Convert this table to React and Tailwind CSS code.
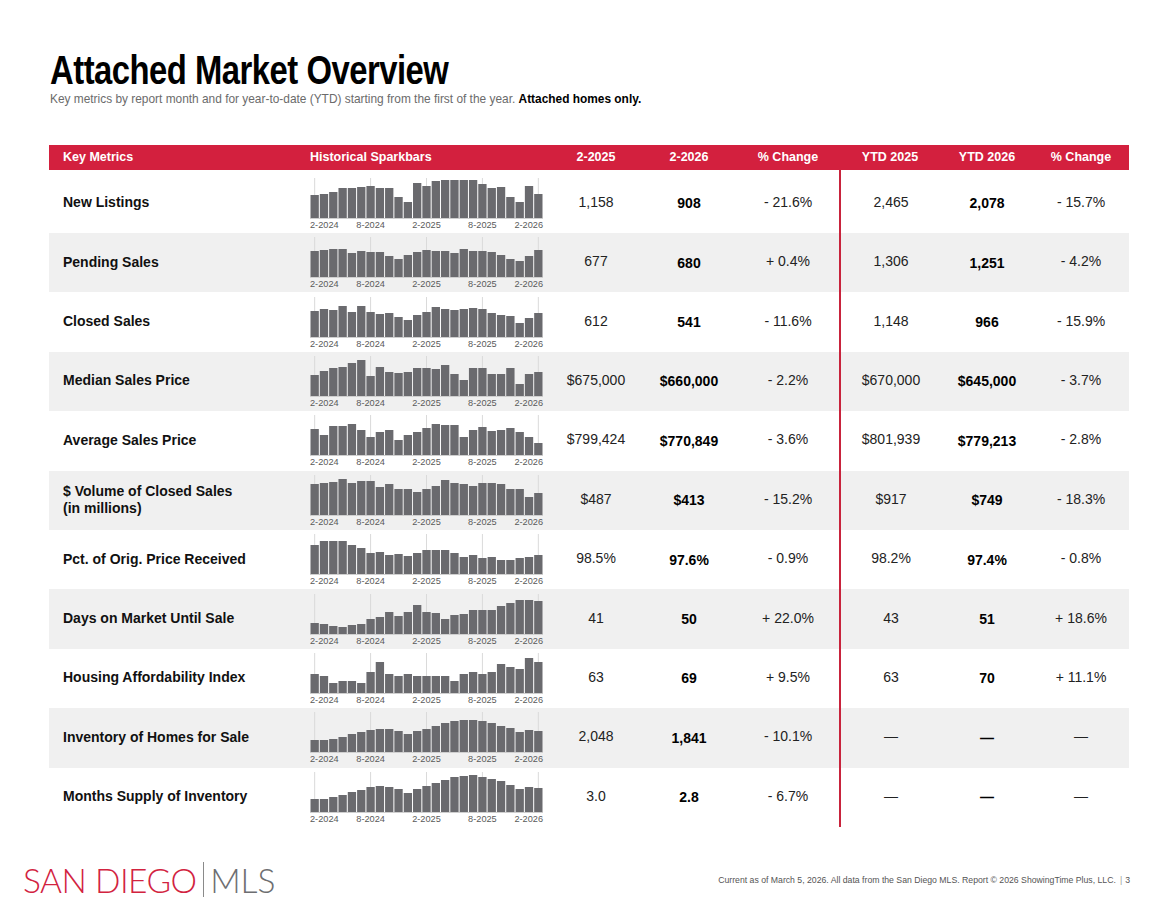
import React from "react";

const rows = [
  { label: "New Listings", a: "1,158", b: "908", c: "- 21.6%", d: "2,465", e: "2,078", f: "- 15.7%",
    bars: [23,24,26,30,30,31,32,30,30,21,16,35,32,37,38,38,38,38,34,30,31,21,16,32,24] },
  { label: "Pending Sales", a: "677", b: "680", c: "+ 0.4%", d: "1,306", e: "1,251", f: "- 4.2%",
    bars: [26,27,28,28,24,26,25,25,21,18,22,25,27,26,26,24,28,26,26,25,22,18,16,21,27] },
  { label: "Closed Sales", a: "612", b: "541", c: "- 11.6%", d: "1,148", e: "966", f: "- 15.9%",
    bars: [26,28,27,31,25,31,25,23,24,20,17,22,25,30,28,27,28,29,28,24,22,21,14,19,24] },
  { label: "Median Sales Price", a: "$675,000", b: "$660,000", c: "- 2.2%", d: "$670,000", e: "$645,000", f: "- 3.7%",
    bars: [21,25,28,29,33,36,20,29,24,23,24,28,28,27,31,22,16,28,28,22,22,28,12,22,24] },
  { label: "Average Sales Price", a: "$799,424", b: "$770,849", c: "- 3.6%", d: "$801,939", e: "$779,213", f: "- 2.8%",
    bars: [26,20,29,29,31,25,18,23,25,15,20,23,27,31,30,30,18,25,28,24,25,27,23,18,12] },
  { label: "$ Volume of Closed Sales", label2: "(in millions)", a: "$487", b: "$413", c: "- 15.2%", d: "$917", e: "$749", f: "- 18.3%",
    bars: [31,32,33,36,32,34,34,28,31,26,26,23,26,29,35,32,31,29,32,32,31,26,26,18,22] },
  { label: "Pct. of Orig. Price Received", a: "98.5%", b: "97.6%", c: "- 0.9%", d: "98.2%", e: "97.4%", f: "- 0.8%",
    bars: [29,33,33,33,29,26,21,22,19,20,18,21,24,24,24,21,17,19,16,17,14,14,16,17,19] },
  { label: "Days on Market Until Sale", a: "41", b: "50", c: "+ 22.0%", d: "43", e: "51", f: "+ 18.6%",
    bars: [11,10,8,7,9,10,15,17,22,18,22,29,22,21,15,19,20,24,24,24,28,31,34,34,33] },
  { label: "Housing Affordability Index", a: "63", b: "69", c: "+ 9.5%", d: "63", e: "70", f: "+ 11.1%",
    bars: [19,17,10,12,12,10,21,31,19,17,19,17,17,17,17,12,19,21,19,21,29,26,24,35,31] },
  { label: "Inventory of Homes for Sale", a: "2,048", b: "1,841", c: "- 10.1%", d: "\u2014", e: "\u2014", f: "\u2014",
    bars: [12,12,13,15,18,20,22,23,23,21,18,21,23,26,29,31,32,32,31,29,26,24,20,22,21] },
  { label: "Months Supply of Inventory", a: "3.0", b: "2.8", c: "- 6.7%", d: "\u2014", e: "\u2014", f: "\u2014",
    bars: [13,13,15,17,20,22,25,26,25,23,19,23,26,29,32,35,36,37,35,33,31,27,23,25,24] },
];

const labels = ["2-2024", "8-2024", "2-2025", "8-2025", "2-2026"];

function Spark({ data }) {
  const x0 = 10;
  const pitch = 9.32;
  const base = 44;
  const end = x0 + 25 * pitch;
  return (
    <svg width="251" height="59" className="block">
      {labels.map((l, k) => {
        const x = x0 + (k * 6 + 0.5) * pitch;
        return <line key={l} x1={x} x2={x} y1={4} y2={base} stroke="#dadada" strokeWidth="1" />;
      })}
      {data.map((h, i) => (
        <rect key={i} x={x0 + i * pitch + 0.5} y={base - h} width={pitch - 1} height={h} fill="#6a6a6e" />
      ))}
      <line x1={x0} x2={end} y1={base + 0.5} y2={base + 0.5} stroke="#cfcfcf" strokeWidth="1" />
      {labels.map((l, k) => {
        let x = x0 + (k * 6 + 0.5) * pitch;
        let anchor = "middle";
        if (k === 0) { x = x0; anchor = "start"; }
        if (k === 4) { x = end; anchor = "end"; }
        return (
          <text key={l} x={x} y={54} textAnchor={anchor} fontSize="9.2" fill="#5a5a5a" fontFamily="'Liberation Sans', Arial, sans-serif">
            {l}
          </text>
        );
      })}
    </svg>
  );
}

const grid = "grid grid-cols-[251px_251px_90px_96px_102px_102px_92px_96px]";

export default function App() {
  return (
    <div className="w-[1174px] h-[903px] bg-white flex flex-col font-['Liberation_Sans',Arial,sans-serif] text-[#111]">
      <div className="pl-[50px] pt-[50px]">
        <h1 className="text-[40px] leading-[40px] font-bold text-black tracking-[-0.6px] scale-x-[0.82] origin-left whitespace-nowrap">
          Attached Market Overview
        </h1>
        <p className="mt-[2px] text-[11.9px] leading-[14px] text-[#6b6b6b]">
          Key metrics by report month and for year-to-date (YTD) starting from the first of the year.{" "}
          <span className="font-bold text-black">Attached homes only.</span>
        </p>
      </div>

      <div className="ml-[49px] mt-[39px] w-[1080px]">
        <div className={`${grid} h-[25px] bg-[#d3203e] text-white text-[12.5px] font-bold items-center`}>
          <div className="pl-[14px]">Key Metrics</div>
          <div className="pl-[10px]">Historical Sparkbars</div>
          <div className="text-center">2-2025</div>
          <div className="text-center">2-2026</div>
          <div className="text-center">% Change</div>
          <div className="text-center">YTD 2025</div>
          <div className="text-center">YTD 2026</div>
          <div className="text-center">% Change</div>
        </div>
        {rows.map((r, i) => (
          <div
            key={r.label}
            className={`${grid} ${i === 0 ? "h-[63px] pt-[3.6px]" : "h-[59.4px]"} ${i % 2 === 1 ? "bg-[#f0f0f0]" : "bg-white"} text-[14px]`}
          >
            <div className="pl-[14px] flex flex-col justify-center font-bold leading-[17px] text-[#111] pb-[1px]">
              <span>{r.label}</span>
              {r.label2 && <span>{r.label2}</span>}
            </div>
            <div className="flex items-center">
              <Spark data={r.bars} />
            </div>
            <div className="flex items-center justify-center text-[#222] pb-[2px]">{r.a}</div>
            <div className="flex items-center justify-center font-bold text-black pt-[1px]">{r.b}</div>
            <div className="flex items-center justify-center text-[#222] pb-[2px]">{r.c}</div>
            <div
              className={`flex items-center justify-center text-[#222] border-l-2 border-[#c8233c] ${i === 0 ? "-mt-[3.6px] pt-[1.6px]" : "pb-[2px]"}`}
            >
              {r.d}
            </div>
            <div className="flex items-center justify-center font-bold text-black pt-[1px]">{r.e}</div>
            <div className="flex items-center justify-center text-[#222] pb-[2px]">{r.f}</div>
          </div>
        ))}
      </div>

      <div className="mt-[35px] pl-[23px] pr-[44px] flex items-center justify-between">
        <div className="flex items-center h-[36px]">
          <span className="text-[33.5px] leading-[36px] font-light text-[#d2233f] tracking-[-0.5px] font-['Lato','Open_Sans',sans-serif]">SAN DIEGO</span>
          <span className="w-[1.5px] h-[35px] bg-[#8a8a8a] ml-[6px] mr-[6px]" />
          <span className="text-[33.5px] leading-[36px] font-light text-[#6d6e71] font-['Lato','Open_Sans',sans-serif]">MLS</span>
        </div>
        <div className="text-[8.7px] text-[#555] pt-[2px]">
          Current as of March 5, 2026. All data from the San Diego MLS. Report © 2026 ShowingTime Plus, LLC.
          <span className="ml-[4px] text-[#999]">|</span>
          <span className="ml-[3px]">3</span>
        </div>
      </div>
    </div>
  );
}
